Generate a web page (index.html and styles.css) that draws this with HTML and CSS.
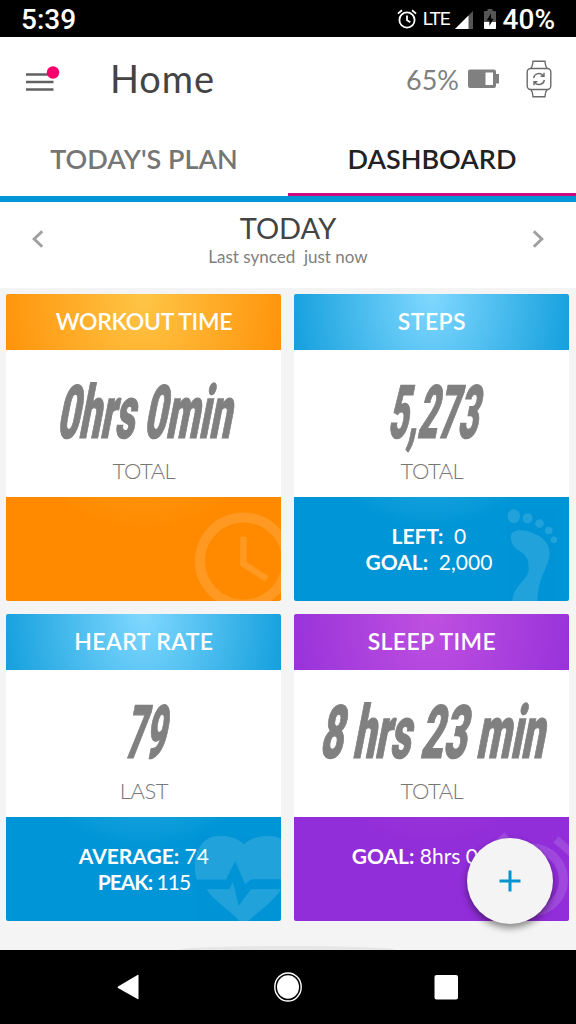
FILE: index.html
```
<!doctype html>
<html lang="en">
<head>
    <title>Home - Dashboard</title>
    <meta charset="utf-8">
    <meta name="viewport" content="width=device-width, initial-scale=1">
    <link rel="stylesheet" href="styles.css">
</head>
<body>
<div class="status-bar">
    <span class="clock">5:39</span>
    <div class="status-icons">
        <svg class="alarm-icon" viewBox="0 0 20 20" fill="none" stroke="#fff" stroke-width="1.8">
            <circle cx="10" cy="11" r="7.6"/>
            <path d="M10 6.5V11.2L13.3 13.2M.9 4.6L5 1.2M19.1 4.6L15 1.2"/>
        </svg>
        <span class="lte">LTE</span>
        <svg class="signal-icon" viewBox="0 0 18 18">
            <path d="M18 0V18H0z" fill="#555"/>
            <path d="M13.5 4.5V18H0z" fill="#fff"/>
        </svg>
        <svg class="charge-icon" viewBox="0 0 12 20">
            <path d="M3.5 0h5v2H11q1 0 1 1v16q0 1-1 1H1q-1 0-1-1V3q0-1 1-1h2.500z" fill="#555"/>
            <path d="M0 13h12v6q0 1-1 1H1q-1 0-1-1z" fill="#fff"/>
            <path d="M7 4.500L2.600 11.500H5.400V17L9.600 9.800H7z" fill="#000"/>
        </svg>
        <span class="phone-battery">40%</span>
    </div>
</div>

<header class="app-bar">
    <svg class="menu-icon" viewBox="0 0 34 28">
        <path d="M0 9.500H27.500M0 17H27.500M0 24.500H27.500" stroke="#616161" stroke-width="2.700"/>
        <circle cx="27" cy="7.500" r="6.200" fill="#f8006b"/>
    </svg>
    <h1>Home</h1>
    <span class="watch-battery">65%</span>
    <svg class="battery-icon" viewBox="0 0 32 20">
        <path d="M2 .5H26q2 0 2 2V5h3v9.500h-3V17q0 2-2 2H2q-2 0-2-2V2.500q0-2 2-2z" fill="#808080"/>
        <path d="M17.500 3.500H25v12.500H17.500z" fill="#fff"/>
    </svg>
    <svg class="watch-icon" viewBox="0 0 26 38" fill="none" stroke="#6b6b6b" stroke-width="1.400">
        <rect x="1.200" y="8.500" width="23.600" height="21" rx="3.500"/>
        <path d="M4.500 8.500Q6.500 7 7 1.200H19Q19.500 7 21.500 8.500M4.500 29.500Q6.500 31 7 36.800H19Q19.500 31 21.500 29.500"/>
        <path d="M7.600 18a5.500 5.500 0 0 1 9.800-2.300M18.400 20a5.500 5.500 0 0 1-9.800 2.300M18 12.800v3.400h-3.400M8 25.200v-3.400h3.400"/>
    </svg>
</header>

<nav class="tabs">
    <a href="#" class="tab">TODAY'S PLAN</a>
    <a href="#" class="tab active">DASHBOARD</a>
</nav>

<div class="date-bar">
    <svg class="chevron" viewBox="0 0 12 18"><path d="M10.200 1.200L2.200 9L10.200 16.800"/></svg>
    <div class="date-text">
        <h2>TODAY</h2>
        <p>Last synced&nbsp; just now</p>
    </div>
    <svg class="chevron" viewBox="0 0 12 18"><path d="M1.800 1.200L9.800 9L1.800 16.800"/></svg>
</div>

<main class="cards">
    <section class="card orange">
        <h3 class="tight">WORKOUT TIME</h3>
        <div class="card-body">
            <svg class="value" viewBox="0 0 275 94">
                <text x="50" y="74" textLength="174" lengthAdjust="spacingAndGlyphs">0hrs 0min</text>
            </svg>
            <span class="label">TOTAL</span>
        </div>
        <div class="card-foot">
            <svg class="watermark" viewBox="0 0 275 104" fill="none" stroke="#fff">
                <circle cx="237.500" cy="64" r="43.500" stroke-width="10"/>
                <path d="M237.500 39.700V67L261 82" stroke-width="6.500"/>
            </svg>
        </div>
    </section>

    <section class="card blue">
        <h3>STEPS</h3>
        <div class="card-body">
            <svg class="value" viewBox="0 0 275 94">
                <text x="93" y="74" textLength="90" lengthAdjust="spacingAndGlyphs">5,273</text>
            </svg>
            <span class="label">TOTAL</span>
        </div>
        <div class="card-foot">
            <svg class="watermark" viewBox="0 0 275 104" fill="#fff">
                <ellipse cx="219.800" cy="19.300" rx="6.200" ry="7"/>
                <circle cx="233.500" cy="21.300" r="5"/>
                <circle cx="245.500" cy="26.500" r="4.300"/>
                <circle cx="254.800" cy="33.500" r="3.800"/>
                <circle cx="259.800" cy="42.700" r="3.300"/>
                <path d="M216.800 41C216 32 228 32 236 35C248 39 256 46 255.500 57C255 70 243.500 80 243.500 104H218.500C219 88 235 83 234.800 71C234.500 50 219 58 216.800 41z"/>
            </svg>
            <p class="shift"><b>LEFT:</b>&nbsp; 0</p>
            <p class="shift"><b>GOAL:</b>&nbsp; 2,000</p>
        </div>
    </section>

    <section class="card blue">
        <h3>HEART RATE</h3>
        <div class="card-body">
            <svg class="value" viewBox="0 0 275 94">
                <text x="118" y="74" textLength="40" lengthAdjust="spacingAndGlyphs">79</text>
            </svg>
            <span class="label">LAST</span>
        </div>
        <div class="card-foot">
            <svg class="watermark" viewBox="0 0 275 104" fill="#fff">
                <path d="M190.500 62.500C184 36 197 18.700 213 18.700C224 18.700 233 22 237.800 27.500C243 22 252 18.700 263 18.700C268 18.700 272 20 275 22V62.300H245.500L239 67L229.200 43.700L220 62.500zM200.500 72.300H223.500L226.800 65L232.800 89L245 72.300H275C268 84 252 95 242 104H233.500C222 92 207 83 200.500 72.300z"/>
            </svg>
            <p><b>AVERAGE:</b> 74</p>
            <p class="peak"><b>PEAK:</b> 115</p>
        </div>
    </section>

    <section class="card purple">
        <h3>SLEEP TIME</h3>
        <div class="card-body">
            <svg class="value" viewBox="0 0 275 94">
                <text x="25" y="74" textLength="224" lengthAdjust="spacingAndGlyphs">8 hrs 23 min</text>
            </svg>
            <span class="label">TOTAL</span>
        </div>
        <div class="card-foot">
            <svg class="watermark" viewBox="0 0 275 104" fill="none" stroke="#fff">
                <circle cx="237.500" cy="63" r="32" stroke-width="9"/>
                <path d="M262 22.500L290 46M213 18.500L187 40" stroke-width="8"/>
            </svg>
            <p><b>GOAL:</b> 8hrs 0min</p>
        </div>
    </section>
</main>

<button class="fab" aria-label="Add">
    <svg viewBox="0 0 22 22"><path d="M11 .5V21.500M.5 11H21.500"/></svg>
</button>

<footer class="nav-bar">
    <svg viewBox="0 0 28 30"><path d="M23.500 3.500V26.500q0 1-1 .5L3 16q-1-.8 0-1.600L22.500 3q1-.5 1 .5z"/></svg>
    <svg viewBox="0 0 28 30">
        <ellipse cx="14" cy="15" rx="13.200" ry="14" fill="none" stroke="#fff" stroke-width="1.400"/>
        <ellipse cx="14" cy="15" rx="11" ry="11.800"/>
    </svg>
    <svg viewBox="0 0 28 30"><rect x="1.500" y="3" width="23.500" height="24.500" rx="2"/></svg>
</footer>
</body>
</html>
```
FILE: styles.css
```
* { box-sizing: border-box; }
body {
    margin: 0;
    height: 1024px;
    display: flex;
    flex-direction: column;
    overflow: hidden;
    background: #f4f4f4;
    font-family: Lato, "Open Sans", sans-serif;
    color: #444;
}
h1, h2, h3, p { margin: 0; font-weight: 400; }
svg { display: block; flex: none; }

/* phone status bar */
.status-bar {
    height: 37px;
    padding: 0 21px 0 21px;
    display: flex;
    align-items: center;
    justify-content: space-between;
    background: #000;
    color: #fff;
    font-family: Roboto, sans-serif;
}
.clock { font-size: 28px; font-weight: 500; padding-top: 2px; }
.status-icons { display: flex; align-items: center; }
.alarm-icon { width: 20px; height: 20px; }
.lte { font-size: 19px; letter-spacing: -1px; margin-left: 6px; }
.signal-icon { width: 18px; height: 18px; margin: 2px 0 0 5px; }
.charge-icon { width: 12px; height: 20px; margin-left: 11px; }
.phone-battery { font-size: 28px; font-weight: 500; margin-left: 7px; padding-top: 2px; }

/* app bar */
.app-bar {
    height: 84px;
    padding: 0 24px 0 26px;
    display: flex;
    align-items: center;
    background: #fff;
}
.menu-icon { width: 34px; height: 28px; margin-bottom: 1px; }
.app-bar h1 {
    flex: 1;
    margin-left: 50px;
    padding-bottom: 2px;
    font-size: 38px;
    letter-spacing: .9px;
}
.watch-battery { font-size: 27px; color: #808080; }
.battery-icon { width: 32px; height: 20px; margin-left: 9px; }
.watch-icon { width: 26px; height: 38px; margin-left: 26px; }

/* tabs */
.tabs {
    height: 81px;
    display: flex;
    background: #fff;
    border-bottom: 6px solid #0095d6;
}
.tab {
    flex: 1;
    display: flex;
    align-items: center;
    justify-content: center;
    border-bottom: 3px solid transparent;
    padding-top: 2px;
    color: #757575;
    font-size: 27px;
    font-weight: 600;
    text-decoration: none;
}
.tab.active { color: #222; border-bottom-color: #cd0a80; }

/* date switcher */
.date-bar {
    height: 86px;
    padding: 10px 32px 0;
    display: flex;
    justify-content: space-between;
    background: #fff;
}
.date-text { text-align: center; }
.date-text h2 { font-size: 29px; line-height: 32px; }
.date-text p { padding-top: 1px; font-size: 17px; line-height: 24px; color: #808080; }
.chevron {
    width: 12px;
    height: 18px;
    margin-top: 18px;
    fill: none;
    stroke: #a0a0a0;
    stroke-width: 3;
}

/* cards */
.cards {
    flex: 1;
    padding: 6.4px 6.4px 0;
    display: grid;
    grid-template-columns: 275px 275px;
    grid-auto-rows: 307px;
    align-content: start;
    gap: 13px;
}
.card {
    display: flex;
    flex-direction: column;
    border-radius: 2px;
    overflow: hidden;
    text-align: center;
    color: #fff;
}
.orange { background: radial-gradient(170px 235px at 50% 0, #ffc545, #ff8a00); }
.blue { background: radial-gradient(170px 235px at 50% 0, #80d8ff, #0095d6); }
.purple { background: radial-gradient(170px 235px at 50% 0, #bf50e0, #912dd9); }
.card h3 {
    height: 55.5px;
    line-height: 54px;
    font-size: 23px;
    font-weight: 600;
    letter-spacing: .4px;
}
.card h3.tight { letter-spacing: -.3px; }
.card-body {
    height: 147px;
    padding-top: 14px;
    background: #fff;
}
.value {
    width: 275px;
    height: 94px;
    overflow: visible;
}
.value text {
    font: 900 74px Roboto, sans-serif;
    fill: #808080;
    stroke: #808080;
    stroke-width: 1.2;
    transform: skewX(-11deg);
    transform-origin: 137px 74px;
}
.label {
    display: block;
    line-height: 26px;
    font-size: 22px;
    font-weight: 300;
    letter-spacing: -.5px;
    color: #777;
}
.card-foot {
    position: relative;
    flex: 1;
    padding-top: 26px;
    font-size: 21px;
    line-height: 26px;
}
.card-foot p { position: relative; }
.card-foot .shift { padding-right: 6px; }
.card-foot .peak { letter-spacing: -1px; }
.card-foot b { font-weight: 700; }
.watermark {
    position: absolute;
    top: 0;
    left: 0;
    width: 275px;
    height: 104px;
    opacity: .13;
}

/* floating add button */
.fab {
    position: absolute;
    left: 467px;
    top: 838px;
    width: 86px;
    height: 86px;
    padding: 32px;
    border: 0;
    border-radius: 50%;
    background: #f4f4f4;
    box-shadow: 0 4px 7px rgba(0,0,0,.45);
}
.fab path { stroke: #0095d0; stroke-width: 3; }

/* android navigation */
.nav-bar {
    position: relative;
    height: 74px;
    padding: 0 115px;
    display: flex;
    align-items: center;
    justify-content: space-between;
    background: #000;
}
.nav-bar::before {
    content: "";
    position: absolute;
    left: 178px;
    top: -4px;
    width: 218px;
    height: 4px;
    border-radius: 50% 50% 0 0 / 100% 100% 0 0;
    background: #e6e6e6;
}
.nav-bar svg { width: 28px; height: 30px; fill: #fff; }
```
